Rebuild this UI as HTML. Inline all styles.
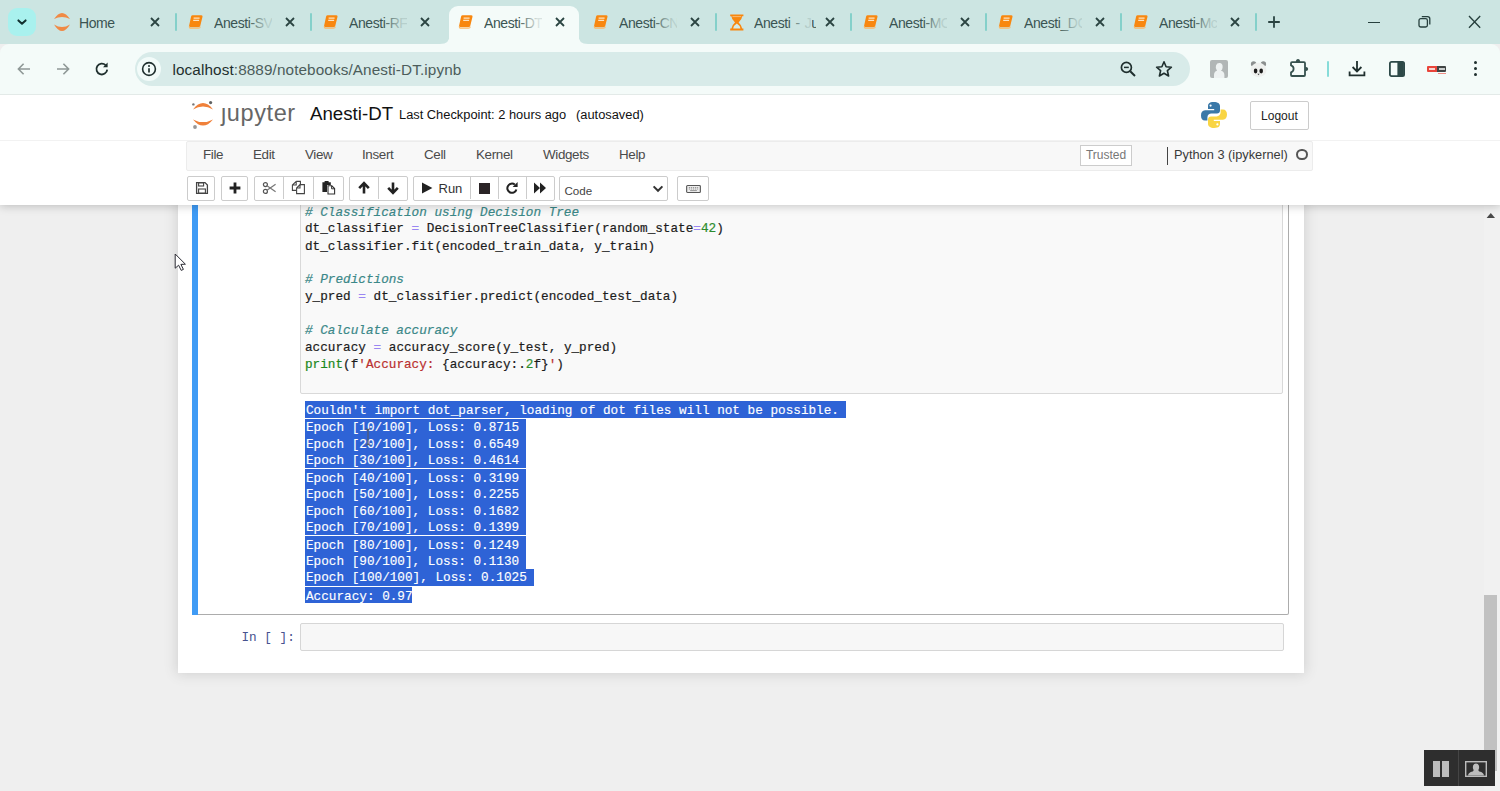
<!DOCTYPE html>
<html>
<head>
<meta charset="utf-8">
<title>Anesti-DT</title>
<style>
html,body{margin:0;padding:0;}
body{width:1500px;height:791px;overflow:hidden;position:relative;background:#efefef;font-family:"Liberation Sans",sans-serif;color:#000;}
.abs{position:absolute;}
/* ---------- browser chrome ---------- */
#tabstrip{left:0;top:0;width:1500px;height:44px;background:#cce5e2;}
#toolbar{left:0;top:44px;width:1500px;height:50px;background:#f4fbf9;border-radius:9px 9px 0 0;}
#tbline{left:0;top:93.6px;width:1500px;height:1.4px;background:#e3eae8;}
#activetab{left:449.4px;top:6.4px;width:129.2px;height:38px;background:#f4fbf9;border-radius:9px 9px 0 0;}
.tabtxt{word-spacing:1.6px;top:13.5px;font-size:14px;letter-spacing:-0.42px;color:#3a5452;white-space:nowrap;width:58px;overflow:hidden;height:18px;line-height:18px;}
.tabfade{top:14px;width:22px;height:18px;background:linear-gradient(90deg,rgba(204,229,226,0),#cce5e2);}
.tabx{top:12px;width:20px;height:20px;}
.sep{top:13.3px;width:2.2px;height:17.4px;background:#84d0ca;border-radius:1px;margin-left:0.6px;}
#omni{left:135px;top:52px;width:1055px;height:34px;border-radius:17px;background:#d8ebe9;}
#url{left:172.5px;top:59.5px;font-size:15.3px;line-height:20px;color:#4c5d5b;white-space:nowrap;letter-spacing:0.1px;}#url b{font-weight:normal;color:#1f2f2e;}
/* ---------- jupyter ---------- */
#header{left:0;top:95px;width:1500px;height:110px;background:#fff;box-shadow:0 1px 9px rgba(0,0,0,0.22);clip-path:inset(0 0 -14px 0);}
#menubar{left:186px;top:140.5px;width:1127px;height:30px;background:#f8f8f8;border:1px solid #ececec;box-sizing:border-box;border-radius:2px;}
.menu{top:147px;font-size:13.4px;line-height:16px;color:#4a4a4a;letter-spacing:-0.35px;}
.btn{top:176.2px;height:24.4px;box-sizing:border-box;border:1px solid #ccc;background:#fff;border-radius:2px;}
#nbcontainer{left:178px;top:200px;width:1126px;height:472.5px;background:#fff;box-shadow:0 0 12px 1px rgba(87,87,87,0.2);}
#cell{left:192px;top:196px;width:1097px;height:419px;box-sizing:border-box;border:1px solid #acacac;border-left:none;border-radius:2px;background:#fff;}
#cellbar{left:192px;top:196px;width:5.8px;height:419px;background:#3f9bf5;}
#inarea{left:300px;top:190px;width:983px;height:204px;box-sizing:border-box;border:1px solid #d9d9d9;border-radius:2px;background:#f9f9f9;}
pre{margin:0;font-family:"Liberation Mono",monospace;font-size:12.7px;line-height:16.9px;white-space:pre;}
#code{left:305px;top:204.5px;color:#1c1c1c;-webkit-text-stroke:0.2px;}
.cm{color:#3b8888;font-style:italic;}
.op{color:#9a86f2;-webkit-text-stroke:0.2px #9a86f2;}
.nu{color:#2c8c2c;}
.bi{color:#1c881c;}
.st{color:#b93030;}
.out{left:306px;color:#fff;-webkit-text-stroke:0.15px #fff;}
.sel{left:305px;background:#2e63d6;}
#in2{left:300px;top:622.5px;width:983.5px;height:28.5px;box-sizing:border-box;border:1px solid #d6d6d6;border-radius:2px;background:#f7f7f7;}
#prompt2{left:241.5px;top:630px;color:#47528f;}
/* scrollbar */
#sbar{left:1484px;top:206px;width:16px;height:585px;background:#f1f1f1;}
#sthumb{left:1484px;top:594.5px;width:13.4px;height:176px;background:#c1c1c1;}
</style>
</head>
<body>
<!-- BROWSER CHROME -->
<div class="abs" id="tabstrip"></div>
<div class="abs" id="toolbar"></div>
<div class="abs" id="tbline"></div>
<div class="abs" id="activetab"></div>
<div class="abs" style="left:8px;top:8px;width:28px;height:28px;border-radius:9px;background:#a9f1ee"></div>
<svg class="abs" style="left:15px;top:15px" width="14" height="14" viewBox="0 0 14 14"><path d="M3.4 5.4 L7 8.8 L10.6 5.4" fill="none" stroke="#12302f" stroke-width="2" stroke-linecap="round" stroke-linejoin="round"/></svg>
<svg class="abs" style="left:52.5px;top:12px" width="18" height="20" viewBox="0 0 18 20"><path d="M1 7 Q9 -5.2 17 7 Q9 2.8 1 7Z" fill="#f08a45"/><path d="M1 12.4 Q9 25.6 17 12.4 Q9 17.6 1 12.4Z" fill="#f08a45"/></svg>
<div class="abs tabtxt" style="left:79px;width:36px">Home</div>
<svg class="abs" style="left:149px;top:16px" width="12" height="12" viewBox="0 0 12 12"><path d="M2 2 L10 10 M10 2 L2 10" stroke="#2b4442" stroke-width="1.8" fill="none"/></svg>
<div class="abs sep" style="left:174px"></div>
<svg class="abs" style="left:188px;top:14px" width="16" height="16" viewBox="0 0 16 16"><path d="M4.6 1.2 H13.4 Q14.9 1.2 14.5 2.7 L12.3 11.8 Q12 13.2 10.6 13.2 H2.2 Q0.8 13.2 1.1 11.8 L3.1 2.6 Q3.4 1.2 4.6 1.2Z" fill="#f8870f"/><path d="M1.3 12.4 Q1.2 14.3 3 14.3 H10.4 Q12 14.3 12.4 12.6" fill="none" stroke="#fbb96a" stroke-width="1.1"/><path d="M5.6 4.2 H11.6 M5.2 6.4 H11.1" stroke="#fde3c0" stroke-width="1.2" fill="none"/></svg>
<div class="abs tabtxt" style="left:214px;width:58px">Anesti-SV</div>
<div class="abs" style="left:248px;top:14px;width:24px;height:18px;background:linear-gradient(90deg,rgba(204,229,226,0),rgba(204,229,226,0.85) 80%)"></div>
<svg class="abs" style="left:284px;top:16px" width="12" height="12" viewBox="0 0 12 12"><path d="M2 2 L10 10 M10 2 L2 10" stroke="#2b4442" stroke-width="1.8" fill="none"/></svg>
<div class="abs sep" style="left:309px"></div>
<svg class="abs" style="left:323px;top:14px" width="16" height="16" viewBox="0 0 16 16"><path d="M4.6 1.2 H13.4 Q14.9 1.2 14.5 2.7 L12.3 11.8 Q12 13.2 10.6 13.2 H2.2 Q0.8 13.2 1.1 11.8 L3.1 2.6 Q3.4 1.2 4.6 1.2Z" fill="#f8870f"/><path d="M1.3 12.4 Q1.2 14.3 3 14.3 H10.4 Q12 14.3 12.4 12.6" fill="none" stroke="#fbb96a" stroke-width="1.1"/><path d="M5.6 4.2 H11.6 M5.2 6.4 H11.1" stroke="#fde3c0" stroke-width="1.2" fill="none"/></svg>
<div class="abs tabtxt" style="left:349px;width:58px">Anesti-RF</div>
<div class="abs" style="left:383px;top:14px;width:24px;height:18px;background:linear-gradient(90deg,rgba(204,229,226,0),rgba(204,229,226,0.85) 80%)"></div>
<svg class="abs" style="left:419px;top:16px" width="12" height="12" viewBox="0 0 12 12"><path d="M2 2 L10 10 M10 2 L2 10" stroke="#2b4442" stroke-width="1.8" fill="none"/></svg>
<svg class="abs" style="left:458px;top:14px" width="16" height="16" viewBox="0 0 16 16"><path d="M4.6 1.2 H13.4 Q14.9 1.2 14.5 2.7 L12.3 11.8 Q12 13.2 10.6 13.2 H2.2 Q0.8 13.2 1.1 11.8 L3.1 2.6 Q3.4 1.2 4.6 1.2Z" fill="#f8870f"/><path d="M1.3 12.4 Q1.2 14.3 3 14.3 H10.4 Q12 14.3 12.4 12.6" fill="none" stroke="#fbb96a" stroke-width="1.1"/><path d="M5.6 4.2 H11.6 M5.2 6.4 H11.1" stroke="#fde3c0" stroke-width="1.2" fill="none"/></svg>
<div class="abs tabtxt" style="left:484px;width:58px">Anesti-DT</div>
<div class="abs" style="left:518px;top:14px;width:24px;height:18px;background:linear-gradient(90deg,rgba(244,251,249,0),rgba(244,251,249,0.85) 80%)"></div>
<svg class="abs" style="left:554px;top:16px" width="12" height="12" viewBox="0 0 12 12"><path d="M2 2 L10 10 M10 2 L2 10" stroke="#2b4442" stroke-width="1.8" fill="none"/></svg>
<svg class="abs" style="left:593px;top:14px" width="16" height="16" viewBox="0 0 16 16"><path d="M4.6 1.2 H13.4 Q14.9 1.2 14.5 2.7 L12.3 11.8 Q12 13.2 10.6 13.2 H2.2 Q0.8 13.2 1.1 11.8 L3.1 2.6 Q3.4 1.2 4.6 1.2Z" fill="#f8870f"/><path d="M1.3 12.4 Q1.2 14.3 3 14.3 H10.4 Q12 14.3 12.4 12.6" fill="none" stroke="#fbb96a" stroke-width="1.1"/><path d="M5.6 4.2 H11.6 M5.2 6.4 H11.1" stroke="#fde3c0" stroke-width="1.2" fill="none"/></svg>
<div class="abs tabtxt" style="left:619px;width:58px">Anesti-CN</div>
<div class="abs" style="left:653px;top:14px;width:24px;height:18px;background:linear-gradient(90deg,rgba(204,229,226,0),rgba(204,229,226,0.85) 80%)"></div>
<svg class="abs" style="left:689px;top:16px" width="12" height="12" viewBox="0 0 12 12"><path d="M2 2 L10 10 M10 2 L2 10" stroke="#2b4442" stroke-width="1.8" fill="none"/></svg>
<div class="abs sep" style="left:714px"></div>
<svg class="abs" style="left:729px;top:13.6px" width="16" height="17" viewBox="0 0 16 17"><path d="M1.2 0.6 H14.4 V2.2 H13.2 Q13 5.6 9.6 8.4 Q13 11.2 13.2 14.6 H14.4 V16.4 H1.2 V14.6 H2.4 Q2.6 11.2 6 8.4 Q2.6 5.6 2.4 2.2 H1.2Z" fill="#f8870f"/><path d="M4.2 14.4 Q4.6 11.6 7.8 9.6 Q11 11.6 11.4 14.4Z" fill="#d6ece8"/><path d="M3.4 2.6 H12.2" stroke="#fbc07c" stroke-width="0.9"/></svg>
<div class="abs tabtxt" style="left:754px;width:62px">Anesti - Ju</div>
<div class="abs" style="left:788px;top:14px;width:24px;height:18px;background:linear-gradient(90deg,rgba(204,229,226,0),rgba(204,229,226,0.85) 80%)"></div>
<svg class="abs" style="left:824px;top:16px" width="12" height="12" viewBox="0 0 12 12"><path d="M2 2 L10 10 M10 2 L2 10" stroke="#2b4442" stroke-width="1.8" fill="none"/></svg>
<div class="abs sep" style="left:849px"></div>
<svg class="abs" style="left:863px;top:14px" width="16" height="16" viewBox="0 0 16 16"><path d="M4.6 1.2 H13.4 Q14.9 1.2 14.5 2.7 L12.3 11.8 Q12 13.2 10.6 13.2 H2.2 Q0.8 13.2 1.1 11.8 L3.1 2.6 Q3.4 1.2 4.6 1.2Z" fill="#f8870f"/><path d="M1.3 12.4 Q1.2 14.3 3 14.3 H10.4 Q12 14.3 12.4 12.6" fill="none" stroke="#fbb96a" stroke-width="1.1"/><path d="M5.6 4.2 H11.6 M5.2 6.4 H11.1" stroke="#fde3c0" stroke-width="1.2" fill="none"/></svg>
<div class="abs tabtxt" style="left:889px;width:58px">Anesti-MC</div>
<div class="abs" style="left:923px;top:14px;width:24px;height:18px;background:linear-gradient(90deg,rgba(204,229,226,0),rgba(204,229,226,0.85) 80%)"></div>
<svg class="abs" style="left:959px;top:16px" width="12" height="12" viewBox="0 0 12 12"><path d="M2 2 L10 10 M10 2 L2 10" stroke="#2b4442" stroke-width="1.8" fill="none"/></svg>
<div class="abs sep" style="left:984px"></div>
<svg class="abs" style="left:998px;top:14px" width="16" height="16" viewBox="0 0 16 16"><path d="M4.6 1.2 H13.4 Q14.9 1.2 14.5 2.7 L12.3 11.8 Q12 13.2 10.6 13.2 H2.2 Q0.8 13.2 1.1 11.8 L3.1 2.6 Q3.4 1.2 4.6 1.2Z" fill="#f8870f"/><path d="M1.3 12.4 Q1.2 14.3 3 14.3 H10.4 Q12 14.3 12.4 12.6" fill="none" stroke="#fbb96a" stroke-width="1.1"/><path d="M5.6 4.2 H11.6 M5.2 6.4 H11.1" stroke="#fde3c0" stroke-width="1.2" fill="none"/></svg>
<div class="abs tabtxt" style="left:1024px;width:58px">Anesti_DC</div>
<div class="abs" style="left:1058px;top:14px;width:24px;height:18px;background:linear-gradient(90deg,rgba(204,229,226,0),rgba(204,229,226,0.85) 80%)"></div>
<svg class="abs" style="left:1094px;top:16px" width="12" height="12" viewBox="0 0 12 12"><path d="M2 2 L10 10 M10 2 L2 10" stroke="#2b4442" stroke-width="1.8" fill="none"/></svg>
<div class="abs sep" style="left:1119px"></div>
<svg class="abs" style="left:1133px;top:14px" width="16" height="16" viewBox="0 0 16 16"><path d="M4.6 1.2 H13.4 Q14.9 1.2 14.5 2.7 L12.3 11.8 Q12 13.2 10.6 13.2 H2.2 Q0.8 13.2 1.1 11.8 L3.1 2.6 Q3.4 1.2 4.6 1.2Z" fill="#f8870f"/><path d="M1.3 12.4 Q1.2 14.3 3 14.3 H10.4 Q12 14.3 12.4 12.6" fill="none" stroke="#fbb96a" stroke-width="1.1"/><path d="M5.6 4.2 H11.6 M5.2 6.4 H11.1" stroke="#fde3c0" stroke-width="1.2" fill="none"/></svg>
<div class="abs tabtxt" style="left:1159px;width:58px">Anesti-Mc</div>
<div class="abs" style="left:1193px;top:14px;width:24px;height:18px;background:linear-gradient(90deg,rgba(204,229,226,0),rgba(204,229,226,0.85) 80%)"></div>
<svg class="abs" style="left:1229px;top:16px" width="12" height="12" viewBox="0 0 12 12"><path d="M2 2 L10 10 M10 2 L2 10" stroke="#2b4442" stroke-width="1.8" fill="none"/></svg>
<div class="abs sep" style="left:1254px"></div>
<svg class="abs" style="left:439.6px;top:34px" width="10" height="10" viewBox="0 0 10 10"><path d="M10 0 V10 H0 Q10 10 10 0Z" fill="#f4fbf9"/></svg>
<svg class="abs" style="left:578px;top:34px" width="10" height="10" viewBox="0 0 10 10"><path d="M0 0 V10 H10 Q0 10 0 0Z" fill="#f4fbf9"/></svg>
<svg class="abs" style="left:1267px;top:15px" width="14" height="14" viewBox="0 0 14 14"><path d="M7 1.2 V12.8 M1.2 7 H12.8" stroke="#2b4442" stroke-width="1.8" fill="none"/></svg>
<div class="abs" style="left:1368px;top:21.8px;width:11.6px;height:1.3px;background:#27403e"></div>
<svg class="abs" style="left:1418px;top:15px" width="14" height="14" viewBox="0 0 14 14"><rect x="1" y="3.6" width="8.4" height="8.4" rx="1.8" fill="none" stroke="#27403e" stroke-width="1.3"/><path d="M3.8 1.6 H9.6 Q11.8 1.6 11.8 3.8 V9.6" fill="none" stroke="#27403e" stroke-width="1.3"/></svg>
<svg class="abs" style="left:1468px;top:15px" width="14" height="14" viewBox="0 0 14 14"><path d="M1 1 L12.2 12.8 M12.2 1 L1 12.8" stroke="#27403e" stroke-width="1.35" fill="none"/></svg>
<svg class="abs" style="left:16px;top:61px" width="16" height="16" viewBox="0 0 16 16"><path d="M14 8 H2.6 M7.6 2.8 L2.4 8 L7.6 13.2" fill="none" stroke="#8e9897" stroke-width="1.6"/></svg>
<svg class="abs" style="left:55px;top:61px" width="16" height="16" viewBox="0 0 16 16"><path d="M2 8 H13.4 M8.4 2.8 L13.6 8 L8.4 13.2" fill="none" stroke="#8e9897" stroke-width="1.6"/></svg>
<svg class="abs" style="left:94px;top:61px" width="16" height="16" viewBox="0 0 16 16"><path d="M13.2 8.6 A5.4 5.4 0 1 1 11.6 4.2" fill="none" stroke="#1f2f2e" stroke-width="1.8"/><path d="M13.6 1.6 V6.2 H9 Z" fill="#1f2f2e"/></svg>
<div class="abs" id="omni"></div>
<div class="abs" style="left:137px;top:57px;width:24px;height:24px;border-radius:12px;background:#f2fbf9"></div>
<svg class="abs" style="left:141px;top:61px" width="16" height="16" viewBox="0 0 16 16"><circle cx="8" cy="8" r="6.4" fill="none" stroke="#1f2f2e" stroke-width="1.6"/><path d="M8 7.2 V11.4" stroke="#1f2f2e" stroke-width="1.7"/><circle cx="8" cy="4.9" r="1" fill="#1f2f2e"/></svg>
<div class="abs" id="url"><b>localhost</b>:8889/notebooks/Anesti-DT.ipynb</div>
<svg class="abs" style="left:1119px;top:60px" width="18" height="18" viewBox="0 0 18 18"><circle cx="7.4" cy="7.4" r="5" fill="none" stroke="#1f2f2e" stroke-width="1.7"/><path d="M11.2 11.2 L16 16" stroke="#1f2f2e" stroke-width="2"/><path d="M5 7.4 H9.8" stroke="#1f2f2e" stroke-width="1.5"/></svg>
<svg class="abs" style="left:1155px;top:60px" width="18" height="18" viewBox="0 0 18 18"><path d="M9 1.8 L11.1 6.8 L16.4 7.2 L12.4 10.7 L13.6 16 L9 13.2 L4.4 16 L5.6 10.7 L1.6 7.2 L6.9 6.8 Z" fill="none" stroke="#1f2f2e" stroke-width="1.6" stroke-linejoin="round"/></svg>
<svg class="abs" style="left:1210px;top:60px" width="18" height="18" viewBox="0 0 18 18"><rect x="0" y="0" width="18" height="18" rx="2" fill="#b1b6b6"/><path d="M4 18 V15 Q4 11.6 7 10.8 Q5 8.6 6 5.4 Q7 2.6 10 3 Q13 3.6 12.6 7.4 Q12.4 9.6 11 10.8 Q14.4 11.6 14.4 15 V18Z" fill="#eef2f2"/></svg>
<svg class="abs" style="left:1248px;top:59px" width="22" height="22" viewBox="0 0 22 22"><circle cx="5.6" cy="5" r="2.7" fill="#8b8f8f"/><circle cx="15.4" cy="5" r="2.7" fill="#8b8f8f"/><ellipse cx="10.5" cy="11" rx="8" ry="7.2" fill="#eef0ee"/><ellipse cx="7.6" cy="12" rx="1.8" ry="2.4" fill="#1c1c1c"/><ellipse cx="13.2" cy="12" rx="1.8" ry="2.4" fill="#1c1c1c"/><path d="M9.4 14.8 H11.6 L10.5 16.2Z" fill="#444"/></svg>
<svg class="abs" style="left:1288px;top:58px" width="22" height="22" viewBox="0 0 22 22"><path d="M4 4.2 H16 Q17 4.2 17 5.2 V17 Q17 18 16 18 H4 Q3 18 3 17 V14.4 Q5.6 13.6 5.6 10.8 Q5.6 8.2 3 7.4 V5.2 Q3 4.2 4 4.2Z" fill="none" stroke="#36514e" stroke-width="1.8" stroke-linejoin="round"/><path d="M7.8 4 Q8 1 10 1 Q12 1 12.2 4Z" fill="#36514e"/><path d="M17.4 8.8 Q20.2 9 20.2 11 Q20.2 13 17.4 13.2Z" fill="#36514e"/></svg>
<div class="abs" style="left:1326.5px;top:61px;width:2px;height:16px;border-radius:1px;background:#86dcd9"></div>
<svg class="abs" style="left:1347px;top:59px" width="20" height="20" viewBox="0 0 20 20"><path d="M10 2 V12 M5.6 8 L10 12.4 L14.4 8" fill="none" stroke="#1f2f2e" stroke-width="1.8"/><path d="M2.6 12.6 V16.4 H17.4 V12.6" fill="none" stroke="#1f2f2e" stroke-width="1.8"/></svg>
<svg class="abs" style="left:1388px;top:60px" width="18" height="18" viewBox="0 0 18 18"><rect x="1.9" y="1.9" width="14.2" height="14.2" rx="1.6" fill="none" stroke="#2d4948" stroke-width="1.8"/><rect x="9.4" y="2" width="6.4" height="14" fill="#2d4948"/></svg>
<div class="abs" style="left:1427px;top:66px;width:10px;height:6.4px;background:#e9453b;border-radius:1px 0 0 1px"></div><div class="abs" style="left:1437px;top:66px;width:9.4px;height:6.4px;background:#3f4444;border-radius:0 1px 1px 0"></div><div class="abs" style="left:1429px;top:68px;width:6px;height:2.4px;background:#f8d6d2"></div><div class="abs" style="left:1439px;top:68px;width:5.6px;height:2.4px;background:#c9cdcd"></div><div class="abs" style="left:1437.5px;top:72.6px;width:8.5px;height:1px;background:#ef8d86"></div>
<div class="abs" style="left:1474px;top:61px;width:3.4px;height:3.4px;border-radius:2px;background:#1f2f2e"></div>
<div class="abs" style="left:1474px;top:67px;width:3.4px;height:3.4px;border-radius:2px;background:#1f2f2e"></div>
<div class="abs" style="left:1474px;top:73px;width:3.4px;height:3.4px;border-radius:2px;background:#1f2f2e"></div>
<!-- JUPYTER -->
<div class="abs" id="nbcontainer"></div>
<div class="abs" id="cell"></div>
<div class="abs" id="cellbar"></div>
<div class="abs" id="inarea"></div>
<pre class="abs" id="code"><span class="cm" style="position:relative;top:0.4px"># Classification using Decision Tree</span>
dt_classifier <span class="op">=</span> DecisionTreeClassifier(random_state<span class="op">=</span><span class="nu">42</span>)
<span style="position:relative;top:0.8px">dt_classifier.fit(encoded_train_data, y_train)</span>

<span class="cm"># Predictions</span>
y_pred <span class="op">=</span> dt_classifier.predict(encoded_test_data)

<span class="cm"># Calculate accuracy</span>
accuracy <span class="op">=</span> accuracy_score(y_test, y_pred)
<span class="bi">print</span>(f<span class="st">'Accuracy: </span>{accuracy:.<span class="nu">2</span>f}<span class="st">'</span>)</pre>
<div class="abs sel" style="top:401.30px;height:16.30px;width:541.0px"></div>
<div class="abs sel" style="top:418.60px;height:16.52px;width:221.0px"></div>
<div class="abs sel" style="top:435.07px;height:16.52px;width:221.0px"></div>
<div class="abs sel" style="top:451.53px;height:16.47px;width:221.0px"></div>
<div class="abs sel" style="top:469.00px;height:16.50px;width:221.0px"></div>
<div class="abs sel" style="top:485.45px;height:16.50px;width:221.0px"></div>
<div class="abs sel" style="top:501.90px;height:16.50px;width:221.0px"></div>
<div class="abs sel" style="top:518.35px;height:16.45px;width:221.0px"></div>
<div class="abs sel" style="top:535.80px;height:16.75px;width:221.0px"></div>
<div class="abs sel" style="top:552.50px;height:16.75px;width:221.0px"></div>
<div class="abs sel" style="top:569.20px;height:16.70px;width:228.6px"></div>
<div class="abs sel" style="top:586.90px;height:16.10px;width:106.7px"></div>
<pre class="abs out" style="top:402.9px">Couldn't import dot_parser, loading of dot files will not be possible.</pre>
<pre class="abs out" style="top:420.4px">Epoch [10/100], Loss: 0.8715</pre>
<pre class="abs out" style="top:437.0px">Epoch [20/100], Loss: 0.6549</pre>
<pre class="abs out" style="top:453.2px">Epoch [30/100], Loss: 0.4614</pre>
<pre class="abs out" style="top:470.8px">Epoch [40/100], Loss: 0.3199</pre>
<pre class="abs out" style="top:487.0px">Epoch [50/100], Loss: 0.2255</pre>
<pre class="abs out" style="top:503.8px">Epoch [60/100], Loss: 0.1682</pre>
<pre class="abs out" style="top:520.4px">Epoch [70/100], Loss: 0.1399</pre>
<pre class="abs out" style="top:537.7px">Epoch [80/100], Loss: 0.1249</pre>
<pre class="abs out" style="top:554.2px">Epoch [90/100], Loss: 0.1130</pre>
<pre class="abs out" style="top:570.4px">Epoch [100/100], Loss: 0.1025</pre>
<pre class="abs out" style="top:588.5px">Accuracy: 0.97</pre>
<div class="abs" id="in2"></div>
<pre class="abs" id="prompt2">In [ ]:</pre>
<div class="abs" id="sbar"></div>
<div class="abs" id="sthumb"></div>
<div class="abs" id="header"></div>
<div class="abs" style="left:0;top:139.6px;width:1500px;height:1px;background:#f2f2f2"></div>
<div class="abs" id="menubar"></div>
<svg class="abs" style="left:190px;top:100px" width="28" height="30" viewBox="0 0 28 30"><path d="M3 9.4 Q13 -3.4 23 9.4 Q13 3.8 3 9.4Z" fill="#f0813a"/><path d="M3 19.4 Q13 31.8 23 19.4 Q13 24.8 3 19.4Z" fill="#f0813a"/><circle cx="3.4" cy="4.4" r="1.2" fill="#767677"/><circle cx="20.6" cy="2.6" r="1.6" fill="#616262"/><circle cx="5" cy="27" r="1.9" fill="#989798"/></svg>
<div class="abs" style="left:221px;top:98px;font-size:23.5px;line-height:30px;color:#666;letter-spacing:0.6px">&#567;upyter</div>
<div class="abs" style="left:310px;top:102px;font-size:18.7px;line-height:24px;color:#111">Anesti-DT</div>
<div class="abs" style="left:399px;top:106px;font-size:12.85px;line-height:18px;color:#111;white-space:nowrap">Last Checkpoint: 2 hours ago</div>
<div class="abs" style="left:576px;top:106px;font-size:12.85px;line-height:18px;color:#111;white-space:nowrap">(autosaved)</div>
<svg class="abs" style="left:1200px;top:101px" width="28" height="28" viewBox="0 0 28 28"><path d="M13.8 1 C9 1 8 3 8 5.2 V8 H14.2 V9.2 H5 C2.4 9.2 1 11.4 1 14.4 C1 17.6 2.4 19.6 5 19.6 H7.4 V16.4 C7.4 14.2 9.2 12.6 11.4 12.6 H17 C18.8 12.6 20 11.4 20 9.6 V5.2 C20 2.6 17.8 1 13.8 1Z" fill="#3a78a8"/><circle cx="10.6" cy="4.6" r="1.1" fill="#fff"/><path d="M14.2 27 C19 27 20 25 20 22.8 V20 H13.8 V18.8 H23 C25.6 18.8 27 16.6 27 13.6 C27 10.4 25.6 8.4 23 8.4 H20.6 V11.6 C20.6 13.8 18.8 15.4 16.6 15.4 H11 C9.2 15.4 8 16.6 8 18.4 V22.8 C8 25.4 10.2 27 14.2 27Z" fill="#f9d544"/><circle cx="17.4" cy="23.4" r="1.1" fill="#fff"/></svg>
<div class="abs" style="left:1250px;top:101.3px;width:58.8px;height:29.2px;box-sizing:border-box;border:1px solid #ccc;border-radius:2px;background:#fff;font-size:12px;line-height:28.4px;text-align:center;color:#222">Logout</div>
<div class="abs menu" style="left:203px">File</div>
<div class="abs menu" style="left:253px">Edit</div>
<div class="abs menu" style="left:305px">View</div>
<div class="abs menu" style="left:362px">Insert</div>
<div class="abs menu" style="left:424px">Cell</div>
<div class="abs menu" style="left:476px">Kernel</div>
<div class="abs menu" style="left:543px">Widgets</div>
<div class="abs menu" style="left:619px">Help</div>
<div class="abs" style="left:1080px;top:145px;width:52px;height:21px;box-sizing:border-box;border:1px solid #ccc;background:#fff;font-size:12px;line-height:19px;text-align:center;color:#777">Trusted</div>
<div class="abs" style="left:1313px;top:140.6px;width:187px;height:30px;background:#fff"></div>
<div class="abs" style="left:1167px;top:147px;width:1.4px;height:18px;background:#444"></div>
<div class="abs" style="left:1174px;top:147px;font-size:12.8px;line-height:16px;color:#3a3a3a;white-space:nowrap">Python 3 (ipykernel)</div>
<div class="abs" style="left:1296px;top:148.8px;width:11.6px;height:11.6px;box-sizing:border-box;border:2px solid #555;border-radius:6px"></div>
<div class="abs btn" style="left:187px;width:28px"></div>
<div class="abs btn" style="left:221px;width:27px"></div>
<div class="abs btn" style="left:254px;width:90px"></div>
<div class="abs btn" style="left:349px;width:59px"></div>
<div class="abs btn" style="left:413px;width:142px"></div>
<div class="abs btn" style="left:559px;width:109px"></div>
<div class="abs btn" style="left:677px;width:32px"></div>
<div class="abs" style="left:282.8px;top:177px;width:1px;height:22px;background:#ccc"></div>
<div class="abs" style="left:312.6px;top:177px;width:1px;height:22px;background:#ccc"></div>
<div class="abs" style="left:378px;top:177px;width:1px;height:22px;background:#ccc"></div>
<div class="abs" style="left:469.6px;top:177px;width:1px;height:22px;background:#ccc"></div>
<div class="abs" style="left:497.6px;top:177px;width:1px;height:22px;background:#ccc"></div>
<div class="abs" style="left:525.6px;top:177px;width:1px;height:22px;background:#ccc"></div>
<svg class="abs" style="left:195px;top:181px" width="14" height="14" viewBox="0 0 14 14"><path d="M1.6 1.6 H10 L12.4 4 V12.4 H1.6Z" fill="none" stroke="#444" stroke-width="1.3"/><rect x="3.6" y="1.8" width="5" height="3.2" fill="none" stroke="#444" stroke-width="1.1"/><rect x="3.6" y="8" width="6.8" height="4.2" fill="none" stroke="#444" stroke-width="1.1"/></svg>
<svg class="abs" style="left:228px;top:181px" width="14" height="14" viewBox="0 0 14 14"><path d="M7 1.6 V12.4 M1.6 7 H12.4" stroke="#222" stroke-width="2.8"/></svg>
<svg class="abs" style="left:262px;top:181px" width="15" height="14" viewBox="0 0 15 14"><circle cx="3.4" cy="3.6" r="2" fill="none" stroke="#555" stroke-width="1.2"/><circle cx="3.4" cy="10.4" r="2" fill="none" stroke="#555" stroke-width="1.2"/><path d="M5 4.8 L13.6 10.8 M5 9.2 L13.6 3.2" stroke="#777" stroke-width="1.2"/></svg>
<svg class="abs" style="left:291px;top:180px" width="15" height="15" viewBox="0 0 15 15"><path d="M5.2 1.4 H9.4 V5.2 M5.2 1.4 L1.4 5 V10.4 H5.2 M1.4 5 H5.2 V1.4" fill="none" stroke="#444" stroke-width="1.1"/><path d="M9 4.6 H13.4 V13.6 H5.6 V8 Z M9 4.6 V8 H5.6" fill="none" stroke="#444" stroke-width="1.1"/></svg>
<svg class="abs" style="left:321px;top:180px" width="15" height="15" viewBox="0 0 15 15"><path d="M1.4 2.2 H9.8 V5 H6 V12 H1.4Z" fill="#222"/><rect x="3.6" y="1" width="4" height="2.4" fill="#222"/><path d="M7 5.8 H10.8 L13.6 8.6 V14 H7Z" fill="#fff" stroke="#333" stroke-width="1.1"/><path d="M10.6 5.8 V8.8 H13.6" fill="none" stroke="#333" stroke-width="1"/></svg>
<svg class="abs" style="left:357px;top:181px" width="14" height="14" viewBox="0 0 14 14"><path d="M7 12.6 V2.6 M2.2 7.2 L7 2.2 L11.8 7.2" fill="none" stroke="#222" stroke-width="2.6"/></svg>
<svg class="abs" style="left:386px;top:181px" width="14" height="14" viewBox="0 0 14 14"><path d="M7 1.4 V11.4 M2.2 6.8 L7 11.8 L11.8 6.8" fill="none" stroke="#222" stroke-width="2.6"/></svg>
<svg class="abs" style="left:421px;top:182px" width="12" height="12" viewBox="0 0 12 12"><path d="M1 0.6 L11.4 6 L1 11.4Z" fill="#222"/></svg>
<div class="abs" style="left:438.5px;top:180.5px;font-size:13px;line-height:16px;color:#333">Run</div>
<div class="abs" style="left:478.5px;top:182.5px;width:11px;height:11px;background:#2a2426"></div>
<svg class="abs" style="left:505px;top:181px" width="14" height="14" viewBox="0 0 14 14"><path d="M11.4 8.4 A4.6 4.6 0 1 1 9.8 3.6" fill="none" stroke="#222" stroke-width="2"/><path d="M12.6 1 V6 H7.6Z" fill="#222"/></svg>
<svg class="abs" style="left:533px;top:182px" width="14" height="12" viewBox="0 0 14 12"><path d="M1 0.6 L7 6 L1 11.4Z M7 0.6 L13 6 L7 11.4Z" fill="#222"/></svg>
<div class="abs" style="left:564.5px;top:182.5px;font-size:11.6px;line-height:16px;color:#444">Code</div>
<svg class="abs" style="left:651.5px;top:183.5px" width="12" height="10" viewBox="0 0 12 10"><path d="M1.6 2.4 L6 6.8 L10.4 2.4" fill="none" stroke="#333" stroke-width="2"/></svg>
<svg class="abs" style="left:685.5px;top:184.5px" width="15" height="8" viewBox="0 0 16 10" preserveAspectRatio="none"><rect x="0.7" y="0.7" width="14.6" height="8.6" rx="1" fill="#eee" stroke="#555" stroke-width="1.2"/><path d="M3 3.2 H13 M3 5 H13" stroke="#888" stroke-width="1" stroke-dasharray="1.4 0.8"/><path d="M4.4 7 H11.6" stroke="#888" stroke-width="1"/></svg>
<svg class="abs" style="left:1486px;top:212px" width="10" height="7" viewBox="0 0 10 7"><path d="M0.6 6 L4.8 1 L9 6Z" fill="#484848"/></svg>
<svg class="abs" style="left:173px;top:252px" width="16" height="21" viewBox="0 0 16 21"><path d="M2.2 2 V16.2 L5.6 13.2 L8.2 18.4 L10.4 17.4 L7.9 12.4 L12.4 12.2 Z" fill="#fff" stroke="#2a2a33" stroke-width="1" stroke-linejoin="round"/></svg>
<svg class="abs" style="left:363.1px;top:428px" width="10" height="18" viewBox="0 0 10 18"><path d="M2.6 0.8 Q5 0.8 5 3 Q5 0.8 7.4 0.8 M5 3 V15 M2.6 17.2 Q5 17.2 5 15 Q5 17.2 7.4 17.2" fill="none" stroke="#5a5a62" stroke-width="1.1"/></svg>
<div class="abs" style="left:1423.5px;top:750px;width:71px;height:35.5px;background:#2e2e2e"></div>
<div class="abs" style="left:1458px;top:750px;width:1px;height:35.5px;background:#454545"></div>
<div class="abs" style="left:1433px;top:761px;width:6.6px;height:15.6px;background:#bcbcbc"></div>
<div class="abs" style="left:1442.4px;top:761px;width:6.6px;height:15.6px;background:#bcbcbc"></div>
<svg class="abs" style="left:1465px;top:761px" width="22" height="16" viewBox="0 0 22 16"><rect x="0.7" y="0.7" width="20.6" height="14.6" fill="#2e2e2e" stroke="#bcbcbc" stroke-width="1.4"/><path d="M3 14.6 Q3.4 11.4 7.6 10.6 Q8.6 10.2 8.6 9 Q7.4 7.4 8 4.8 Q8.8 2.6 11 2.6 Q13.2 2.6 14 4.8 Q14.6 7.4 13.4 9 Q13.4 10.2 14.4 10.6 Q18.6 11.4 19 14.6Z" fill="#bcbcbc"/></svg>
</body>
</html>
